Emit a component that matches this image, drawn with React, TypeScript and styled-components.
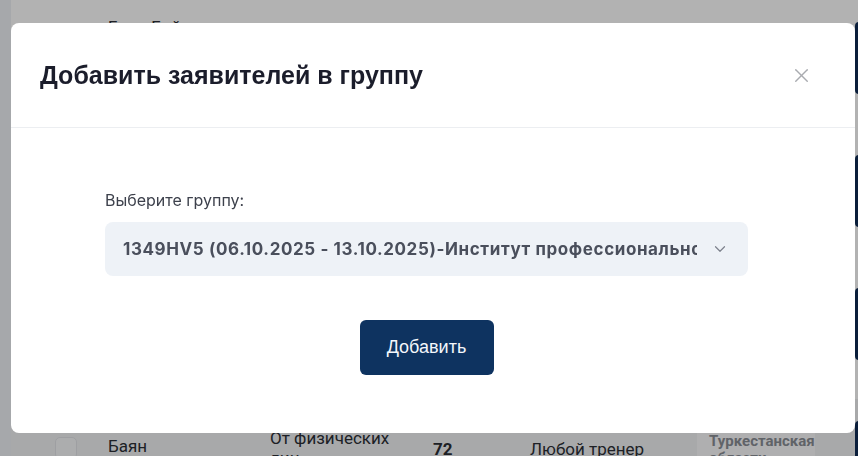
import React from 'react';
import styled, { createGlobalStyle } from 'styled-components';
import { X, ChevronDown } from 'lucide-react';

const GlobalStyle = createGlobalStyle`
  html, body {
    margin: 0;
    padding: 0;
    height: 100%;
    overflow: hidden;
    background: #ffffff;
    font-family: 'Inter', 'Roboto', 'Noto Sans', sans-serif;
  }
  #root {
    height: 100%;
  }
`;

/* ---------- page behind the modal ---------- */

const Page = styled.div`
  display: flex;
  height: 100%;
  overflow: hidden;
`;

const SideStrip = styled.div`
  width: 11px;
  flex-shrink: 0;
  background: #eef1f5;
`;

const Table = styled.div`
  flex: 1;
  display: flex;
  flex-direction: column;
`;

const Row = styled.div<{ $h: number; $shade?: boolean }>`
  flex-shrink: 0;
  display: grid;
  grid-template-columns: 97px 162px 163px 97px 167px 158px 1fr;
  height: ${(p) => p.$h}px;
  overflow: hidden;
  background: ${(p) => (p.$shade ? '#f1f2f4' : '#ffffff')};
`;

const Cell = styled.div<{ $top?: number; $bold?: boolean; $wrap?: number }>`
  padding-top: ${(p) => p.$top ?? 0}px;
  max-width: ${(p) => (p.$wrap ? `${p.$wrap}px` : 'none')};
  font-family: 'Roboto', 'Liberation Sans', sans-serif;
  font-size: 17px;
  line-height: 20px;
  color: #2b2f36;
  font-weight: ${(p) => (p.$bold ? 700 : 400)};
`;

const CheckCell = styled.div<{ $top?: number }>`
  padding: ${(p) => p.$top ?? 0}px 0 0 44px;
`;

const CheckBox = styled.div`
  width: 20px;
  height: 20px;
  border-radius: 5px;
  background: #f7f8fa;
  border: 1px solid #e2e4e8;
`;

const RegionCell = styled.div`
  width: 118px;
  background: #fbfbfc;
  padding: 34px 12px 0;
  font-family: 'Roboto', 'Liberation Sans', sans-serif;
  font-weight: 700;
  font-size: 15px;
  line-height: 17px;
  color: #8a8e96;
  box-sizing: border-box;
`;

const ActionCell = styled.div`
  padding-top: 22px;
`;

const ActionBlock = styled.div`
  width: 20px;
  height: 72px;
  background: #0f2c55;
  border-radius: 4px;
`;

/* ---------- modal ---------- */

const Overlay = styled.div`
  position: fixed;
  inset: 0;
  background: rgba(0, 0, 0, 0.3);
  display: flex;
  align-items: flex-start;
  padding: 23px 3px 0 11px;
`;

const Modal = styled.div`
  flex: 1;
  height: 410px;
  background: #ffffff;
  border-radius: 8px;
  display: flex;
  flex-direction: column;
  overflow: hidden;
`;

const Header = styled.div`
  height: 104px;
  display: flex;
  align-items: center;
  justify-content: space-between;
  padding: 0 42px 0 29px;
  border-bottom: 1px solid #eceef1;
`;

const Title = styled.h2`
  margin: 0;
  font-family: 'Liberation Sans', Arial, sans-serif;
  font-size: 25px;
  font-weight: 700;
  color: #1b1d2b;
`;

const CloseButton = styled.button`
  display: flex;
  align-items: center;
  justify-content: center;
  padding: 0;
  border: none;
  background: none;
  color: #a9abb0;
  cursor: pointer;
`;

const Body = styled.div`
  padding: 62px 0 0 94px;
  display: flex;
  flex-direction: column;
  align-items: flex-start;
`;

const Field = styled.div`
  width: 643px;
  display: flex;
  flex-direction: column;
  align-items: center;
`;

const Label = styled.label`
  align-self: flex-start;
  font-family: 'Inter', 'Roboto', sans-serif;
  font-size: 16px;
  line-height: 20px;
  color: #3d414c;
  margin-bottom: 12px;
`;

const Select = styled.div`
  align-self: stretch;
  height: 54px;
  border-radius: 8px;
  background: #eef2f7;
  display: flex;
  align-items: center;
  padding: 0 19px 0 18px;
  gap: 14px;
`;

const SelectValue = styled.span`
  flex: 1;
  white-space: nowrap;
  overflow: hidden;
  font-family: 'Inter', 'Noto Sans', sans-serif;
  font-size: 17px;
  font-weight: 700;
  letter-spacing: 0.6px;
  color: #4a4f5c;
`;

const Chevron = styled.span`
  display: flex;
  color: #7d828d;
`;

const SubmitButton = styled.button`
  margin-top: 44px;
  width: 134px;
  height: 55px;
  border: none;
  border-radius: 6px;
  background: #0e3360;
  color: #f4f7fb;
  font-family: 'Liberation Sans', Arial, sans-serif;
  font-size: 18px;
  cursor: pointer;
`;

const App = () => {
  return (
    <>
      <GlobalStyle />
      <Page>
        <SideStrip />
        <Table>
          <Row $h={133}>
            <CheckCell />
            <Cell $top={17}>Баян Байжан</Cell>
            <Cell />
            <Cell />
            <Cell />
            <Cell />
            <ActionCell>
              <ActionBlock />
            </ActionCell>
          </Row>
          <Row $h={133}>
            <CheckCell />
            <Cell />
            <Cell />
            <Cell />
            <Cell />
            <Cell />
            <ActionCell>
              <ActionBlock />
            </ActionCell>
          </Row>
          <Row $h={133}>
            <CheckCell />
            <Cell />
            <Cell />
            <Cell />
            <Cell />
            <Cell />
            <ActionCell>
              <ActionBlock />
            </ActionCell>
          </Row>
          <Row $h={57} $shade>
            <CheckCell $top={38}>
              <CheckBox />
            </CheckCell>
            <Cell $top={37}>Баян</Cell>
            <Cell $top={29} $wrap={130}>
              От физических лиц
            </Cell>
            <Cell $top={40} $bold>
              72
            </Cell>
            <Cell $top={40}>Любой тренер</Cell>
            <RegionCell>Туркестанская области</RegionCell>
            <ActionCell>
              <ActionBlock />
            </ActionCell>
          </Row>
        </Table>
      </Page>

      <Overlay>
        <Modal>
          <Header>
            <Title>Добавить заявителей в группу</Title>
            <CloseButton aria-label="Закрыть">
              <X size={23} strokeWidth={1.5} />
            </CloseButton>
          </Header>
          <Body>
            <Field>
              <Label>Выберите группу:</Label>
              <Select>
                <SelectValue>
                  1349HV5 (06.10.2025 - 13.10.2025)-Институт профессионального развития
                </SelectValue>
                <Chevron>
                  <ChevronDown size={18} strokeWidth={1.6} />
                </Chevron>
              </Select>
              <SubmitButton>Добавить</SubmitButton>
            </Field>
          </Body>
        </Modal>
      </Overlay>
    </>
  );
};

export default App;
